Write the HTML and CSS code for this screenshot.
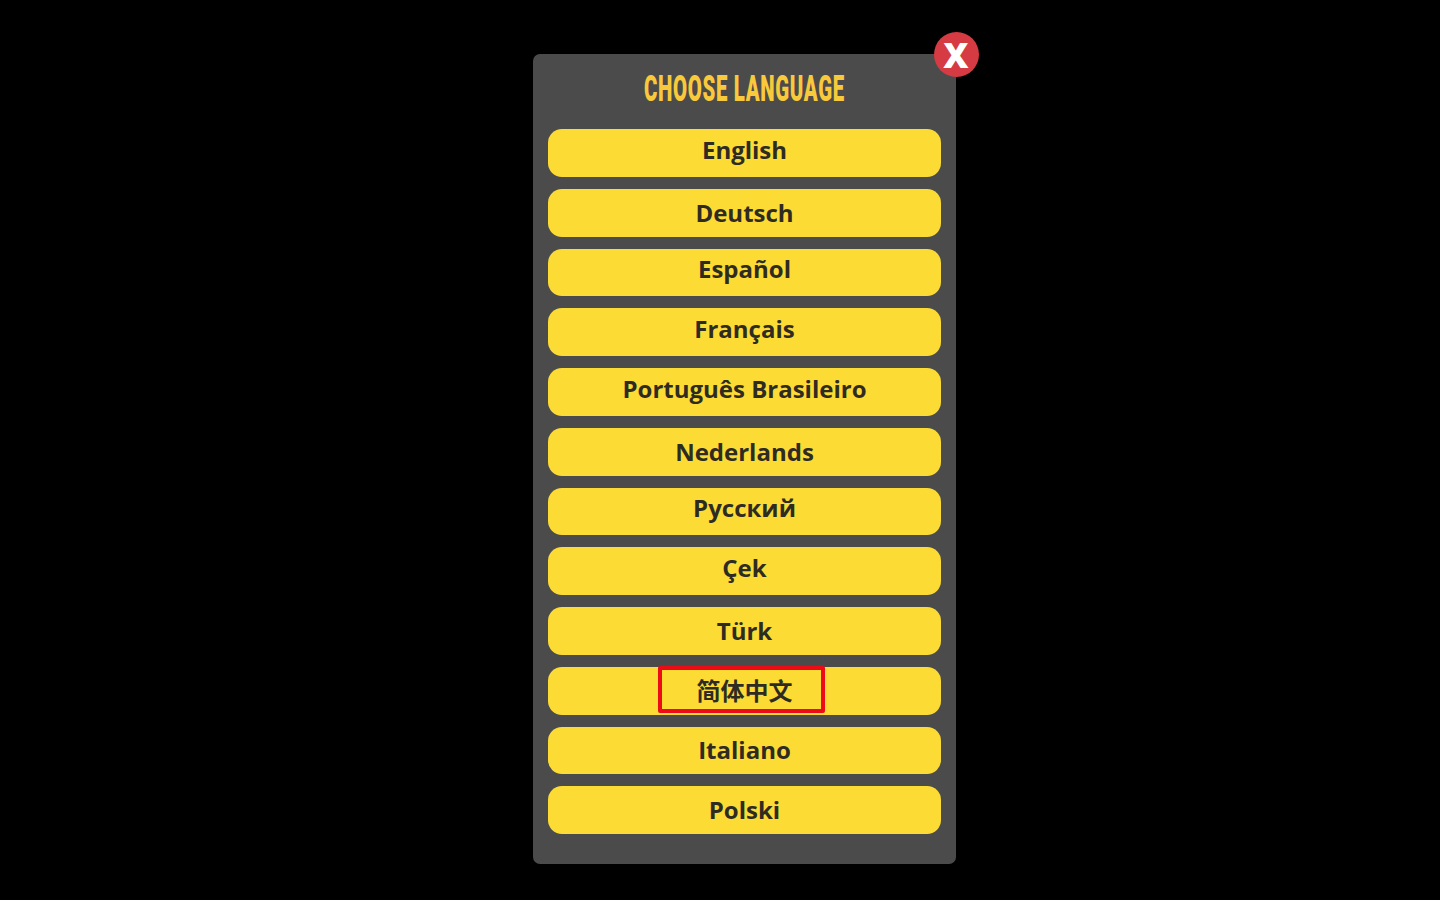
FILE: index.html
```html
<!DOCTYPE html>
<html lang="en">
<head>
<meta charset="utf-8">
<title>Choose Language</title>
<link rel="stylesheet" href="styles.css">
</head>
<body>
<main class="panel">
  <button class="close" type="button" aria-label="Close">X</button>
  <h1 class="title"><span class="title-text">CHOOSE LANGUAGE</span></h1>
  <div class="list">
    <button class="lang up3" type="button">English</button>
    <button class="lang" type="button">Deutsch</button>
    <button class="lang up3" type="button">Español</button>
    <button class="lang up3" type="button">Français</button>
    <button class="lang up3" type="button">Português Brasileiro</button>
    <button class="lang" type="button">Nederlands</button>
    <button class="lang up3" type="button">Русский</button>
    <button class="lang up3" type="button">Çek</button>
    <button class="lang" type="button">Türk</button>
    <button class="lang cjk up1" type="button">简体中文<span class="highlight"></span></button>
    <button class="lang" type="button">Italiano</button>
    <button class="lang" type="button">Polski</button>
  </div>
</main>
</body>
</html>
```
FILE: styles.css
```css
* { box-sizing: border-box; }
html, body { margin: 0; height: 100%; }
body {
  background: #000;
  padding: 54px 0 0 533px;
  font-family: "Open Sans", "Noto Sans CJK SC", sans-serif;
  overflow: hidden;
}
.panel {
  position: relative;
  width: 423px;
  height: 810px;
  padding: 0 15px;
  background: #4b4b4b;
  border-radius: 7px;
}
.close {
  position: absolute;
  top: -22.5px;
  right: -22.5px;
  width: 45px;
  height: 45px;
  padding: 0;
  border: 0;
  border-radius: 50%;
  background: #d63a42;
  color: #fff;
  font: 800 35px/45px "Open Sans", sans-serif;
  text-align: center;
}
.title {
  height: 75px;
  margin: 0;
  display: flex;
  justify-content: center;
  align-items: center;
  color: #f9c93c;
  font: 900 36px/1 Roboto, sans-serif;
  letter-spacing: 1.2px;
}
.title-text {
  display: inline-block;
  white-space: nowrap;
  transform: translateY(-3px) scaleX(0.566);
}
.list {
  display: flex;
  flex-direction: column;
  gap: 12px;
}
.lang {
  position: relative;
  height: 47.75px;
  padding: 0;
  border: 0;
  border-radius: 14px;
  background: #fddb35;
  color: #2e2c22;
  font: 700 24px/32px "Open Sans", "Noto Sans CJK SC", sans-serif;
  text-align: center;
}
.up3 { padding-bottom: 6px; }
.up1 { padding-bottom: 2px; }
.cjk { font-family: "Noto Sans CJK SC", sans-serif; }
.highlight {
  position: absolute;
  left: 110px;
  top: -1px;
  width: 167px;
  height: 47px;
  border: 4px solid #ec0b16;
  border-radius: 2px;
}
```
